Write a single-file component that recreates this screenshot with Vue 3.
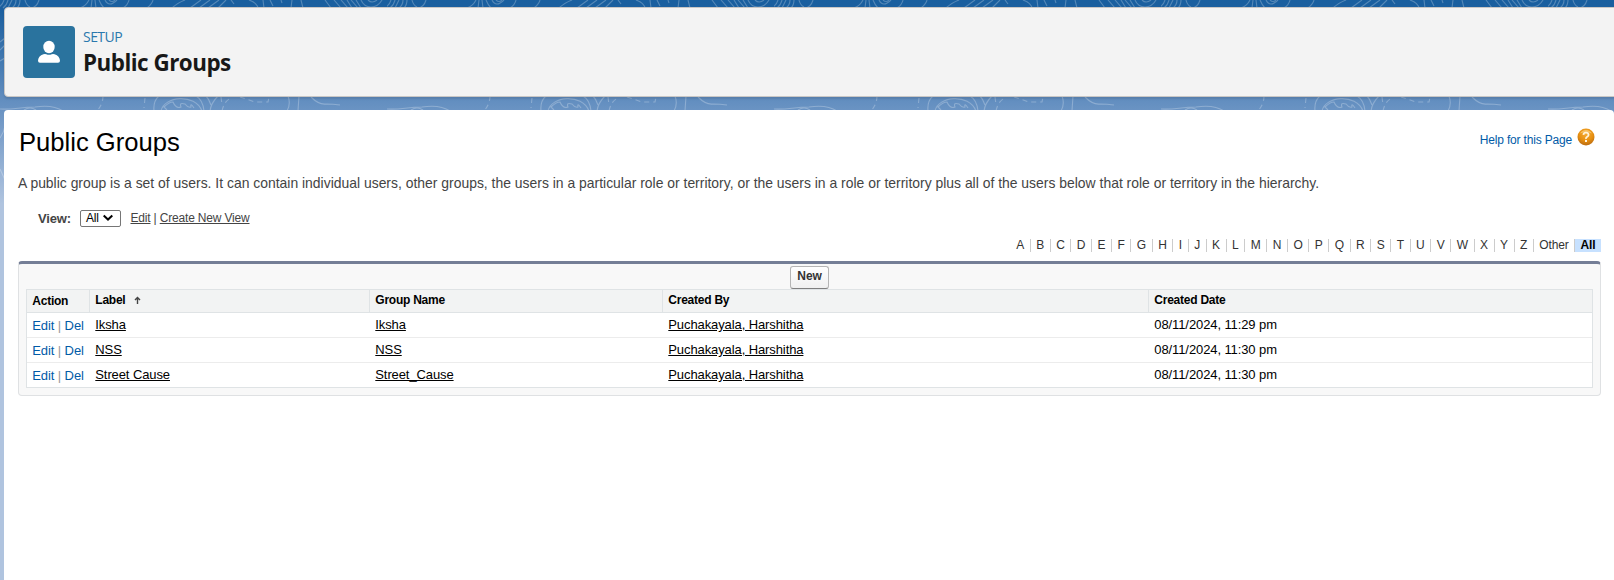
<script setup>
const letters = [...'ABCDEFGHIJKLMNOPQRSTUVWXYZ', 'Other']
const groups = [
  { label: 'Iksha', name: 'Iksha', by: 'Puchakayala, Harshitha', date: '08/11/2024, 11:29 pm' },
  { label: 'NSS', name: 'NSS', by: 'Puchakayala, Harshitha', date: '08/11/2024, 11:30 pm' },
  { label: 'Street Cause', name: 'Street_Cause', by: 'Puchakayala, Harshitha', date: '08/11/2024, 11:30 pm' },
]
</script>

<template>
  <div class="page">
    <svg class="topo" width="1614" height="580" aria-hidden="true">
      <defs>
        <pattern id="contours" width="387" height="580" patternUnits="userSpaceOnUse">
          <g fill="none" stroke="#fff" stroke-opacity=".25" stroke-width="1.1">
            <path d="M-1 7Q3 4 4 0M3 8Q7 5 8 0M8 8 12 0M12 8Q16 5 16 0M17 8Q20 5 20 0M25 0Q26 5 30 7M39 0Q37 7 31 8M80 8Q86 6 89 0M91 8 92 0M95 0 96 8M99 0Q101 5 104 8M105 0Q109 8 117 0M109 0Q112 3 115 0M123 8Q128 5 129 0M147 8Q152 4 153 0M172 8Q177 3 185 0M190 8 201 0M199 8 210 0M208 8 219 0M218 8 226 0M231 0 234 4M249 0Q257 3 258 8M263 0 264 8M270 0 273 6M281 0 282 3M292 0 291 8M301 0 303 8M325 0 331 8M334 0 341 8M341 0 348 8M347 0 352 8M351 0 358 8M356 0 361 8M361 0Q364 7 371 7T382 0M368 0Q372 4 377 0" />
            <path d="M0 42 5 38M0 50 5 45M0 61 5 58M0 138Q4 132 5 126M0 169 5 180" />
            <path d="M0 109C13 110 20 107 35 107C48 105 57 107 63 111M24 110Q30 106 36 110M154 111Q153 101 159 96M204 111Q203 100 196 96M161 111C164 96 195 93 202 111M167 110 164 107Q169 102 173 102Q176 109 181 107Q179 102 185 104Q188 108 191 107Q190 102 194 108M206 96Q209 99 211 105M218 96Q211 103 210 111M288 96Q291 104 287 111M299 96 298 111M311 97Q319 105 326 104 333 104 340 105 342 98M355 96Q358 104 353 111M371 96Q377 104 383 109H387M231 111Q240 106 251 110" />
            <path stroke-dasharray="5 4" d="M103 96Q103 104 97 111M145 98 144 108M221 97 222 105M222 111Q224 101 231 98M240 97 255 102 268 102 269 97" />
          </g>
        </pattern>
      </defs>
      <rect width="1614" height="580" fill="url(#contours)" />
    </svg>

    <header class="setup-head">
      <div class="tile">
        <svg width="52" height="52" viewBox="0 0 52 52">
          <ellipse cx="26" cy="21" rx="5.7" ry="6.2" fill="#fff" />
          <path fill="#fff" d="M20.4 28.2Q22 27.7 23.3 28.2Q26 29.4 28.7 28.2Q30 27.7 31.6 28.2C35 29.4 37 31.8 37 34.8Q37 36.8 35 36.8H17Q15 36.8 15 34.8C15 31.8 17 29.4 20.4 28.2Z" />
        </svg>
      </div>
      <div class="titles">
        <span class="eyebrow">SETUP</span>
        <span class="head-title">Public Groups</span>
      </div>
    </header>

    <main class="content">
      <div class="title-row">
        <h1>Public Groups</h1>
        <a class="help">
          <span>Help for this Page</span>
          <svg width="18" height="18" viewBox="0 0 18 18">
            <defs>
              <radialGradient id="orb" cx=".5" cy=".3" r=".7">
                <stop offset="0" stop-color="#f5ac35" />
                <stop offset=".6" stop-color="#e78f10" />
                <stop offset="1" stop-color="#b96b12" />
              </radialGradient>
            </defs>
            <circle cx="9" cy="9" r="8.5" fill="url(#orb)" />
            <path d="M3 5.5A7 7 0 0 1 15 5.5Q9 3 3 5.5Z" fill="#fbd184" opacity=".7" />
            <path d="M6.4 6.8Q6.6 4.7 9 4.7T11.6 6.8Q11.6 8 10.2 8.8T9 11" fill="none" stroke="#fff3dc" stroke-width="1.8" />
            <rect x="8" y="12" width="2" height="2" fill="#fff3dc" />
          </svg>
        </a>
      </div>
      <p class="intro">A public group is a set of users. It can contain individual users, other groups, the users in a particular role or territory, or the users in a role or territory plus all of the users below that role or territory in the hierarchy.</p>

      <div class="view-row">
        <b>View:</b>
        <span class="picker">All
          <svg width="12" height="8" viewBox="0 0 12 8"><path d="M1.7 1.6 6 5.6 10.3 1.6" fill="none" stroke="#000" stroke-width="2" /></svg>
        </span>
        <span class="view-links"><u>Edit</u> | <u>Create New View</u></span>
      </div>

      <nav class="rolodex">
        <span v-for="l in letters" :key="l" class="letter">{{ l }}</span>
        <span class="all">All</span>
      </nav>

      <section class="panel">
        <div class="toolbar"><button>New</button></div>
        <table>
          <colgroup><col class="c1" /><col class="c2" /><col class="c3" /><col class="c4" /><col /></colgroup>
          <thead>
            <tr>
              <th class="act">Action</th>
              <th>Label<svg class="sort" width="7" height="8" viewBox="0 0 7 8"><path d="M3.5 8V1.5M1 4 3.5 1.4 6 4" fill="none" stroke="#444" stroke-width="1.4" /></svg></th>
              <th>Group Name</th>
              <th>Created By</th>
              <th>Created Date</th>
            </tr>
          </thead>
          <tbody>
            <tr v-for="g in groups" :key="g.label">
              <td class="act"><a>Edit</a><i>|</i><a>Del</a></td>
              <td><u>{{ g.label }}</u></td>
              <td><u>{{ g.name }}</u></td>
              <td><u>{{ g.by }}</u></td>
              <td>{{ g.date }}</td>
            </tr>
          </tbody>
        </table>
      </section>
    </main>
  </div>
</template>

<style>
body { margin: 0; overflow: hidden; }
</style>

<style scoped>
.page {
  position: relative;
  box-sizing: border-box;
  width: 1614px;
  height: 580px;
  padding: 7px 0 0 4px;
  overflow: hidden;
  background: linear-gradient(#195f9f 0, #1b5f9f 10px, #6a93c3 110px, #b0c4df 204px);
  font-family: "Liberation Sans", Arial, sans-serif;
  color: #000;
}
.topo { position: absolute; left: 0; top: 0; }
.setup-head {
  position: relative;
  box-sizing: border-box;
  display: flex;
  gap: 8px;
  width: 1620px;
  height: 90px;
  padding: 18px;
  background: #f3f3f3;
  border: 1px solid #c9c7c5;
  border-radius: 4px;
  box-shadow: 0 2px 2px rgba(0, 0, 0, .1);
}
.tile { width: 52px; height: 52px; border-radius: 4px; background: #2a739e; }
.tile svg { display: block; }
.titles { display: flex; flex-direction: column; font-family: "Open Sans", "Noto Sans", sans-serif; }
.eyebrow { height: 21px; font-size: 14px; line-height: 22px; letter-spacing: -.55px; color: #2a78ad; }
.head-title { font-size: 22.4px; line-height: 32px; font-weight: 700; letter-spacing: -.5px; color: #181818; white-space: nowrap; }
.content {
  position: relative;
  box-sizing: border-box;
  width: 1610px;
  height: 480px;
  margin-top: 13px;
  padding: 17px 13px 0 14px;
  background: #fff;
  border-radius: 4px 4px 0 0;
}
.title-row { display: flex; justify-content: space-between; height: 44px; }
h1 { margin: 0 0 0 1px; font-size: 25.6px; font-weight: 400; line-height: 30px; }
.help { display: flex; gap: 5px; padding-right: 6px; font-size: 12px; letter-spacing: -.18px; line-height: 26px; color: #015ba7; }
.help svg { margin-top: 1px; }
.intro { margin: 0; height: 36px; font-size: 13.93px; line-height: 24px; color: #444; white-space: nowrap; }
.view-row { display: flex; align-items: center; height: 22px; padding: 0 0 2px 20px; font-size: 12px; letter-spacing: -.18px; color: #444; }
.view-row b { width: 42px; font-size: 13px; }
.picker {
  box-sizing: border-box;
  display: flex;
  align-items: center;
  justify-content: space-between;
  width: 41px;
  height: 17px;
  padding: 0 6px 0 5px;
  border: 1px solid #767676;
  border-radius: 2px;
  color: #000;
}
.view-links { margin-left: 9.5px; }
.rolodex { display: flex; justify-content: flex-end; height: 13px; margin-top: 8px; font-size: 12px; line-height: 13px; color: #333; }
.letter { padding: 0 5.52px 0 5.48px; border-right: 1px solid #ccc; }
.letter:nth-last-child(2) { letter-spacing: -.18px; }
.all { box-sizing: border-box; width: 26px; text-align: center; font-weight: 700; background: #c7e1ff; color: #000; letter-spacing: -.18px; }
.panel {
  box-sizing: border-box;
  height: 135px;
  margin-top: 9px;
  padding: 0 7px;
  background: #f8f8f8;
  border: 1px solid #dfe1e3;
  border-top: 3px solid #747e96;
  border-radius: 4px;
}
.toolbar { display: flex; justify-content: center; height: 25px; padding: 2px 0 0; box-sizing: border-box; }
button {
  box-sizing: border-box;
  width: 39px;
  height: 23px;
  padding: 0 0 3px;
  font: 700 12px "Liberation Sans", Arial, sans-serif;
  letter-spacing: -.1px;
  color: #333;
  background: linear-gradient(#fff, #f0f0f0);
  border: 1px solid #b5b5b5;
  border-bottom-color: #7f7f7f;
  border-radius: 3px;
}
table { width: 1567px; table-layout: fixed; border-collapse: separate; border-spacing: 0; border: 1px solid #dfe3e5; background: #fff; margin: 0; }
.c1 { width: 63px; }
.c2 { width: 280px; }
.c3 { width: 293px; }
.c4 { width: 486px; }
th, td { box-sizing: border-box; padding: 0 0 0 5.3px; text-align: left; white-space: nowrap; }
th { height: 23px; padding-bottom: 1px; font-size: 12px; letter-spacing: -.24px; line-height: 21px; background: #f2f3f3; border-bottom: 1px solid #dfe3e5; border-right: 1px solid #dfe3e5; }
th:last-child { border-right: 0; }
td { height: 25px; font-size: 13px; letter-spacing: -.1px; line-height: 24px; border-bottom: 1px solid #ececec; }
tbody tr:last-child td { height: 24px; border-bottom: 0; }
th.act { padding-top: 1px; padding-bottom: 0; line-height: 21px; }
td.act { padding-top: 1px; line-height: 23px; }
.act a { color: #015ba7; }
.act i { margin: 0 3.5px; font-style: normal; color: #999; }
.sort { margin-left: 9px; }
u { text-underline-offset: 1px; }
</style>
